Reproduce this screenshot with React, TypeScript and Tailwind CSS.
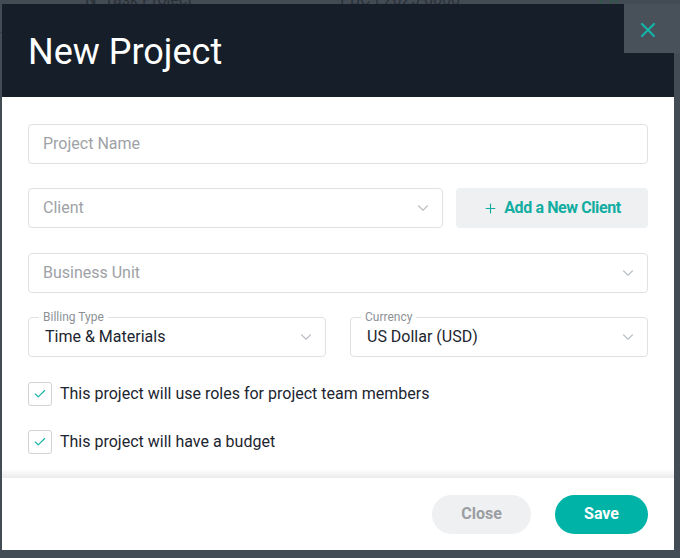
import { Check, ChevronDown, Plus, X } from "lucide-react";

const Chevron = () => (
  <ChevronDown className="w-[18px] h-[18px] text-[#bcc0c4]" strokeWidth={1.5} />
);

const SelectBox = ({ label, value, placeholder }: { label?: string; value?: string; placeholder?: string }) => (
  <div className="relative flex-1 h-[40px] rounded-[4px] border border-[#dfe1e3] flex items-center justify-between pl-[16px] pr-[10px]">
    {label && (
      <span className="absolute -top-[8px] left-[10px] px-[4px] bg-white text-[12px] leading-[14px] text-[#8c9196]">
        {label}
      </span>
    )}
    {value ? (
      <span className="text-[16px] text-[#1c2530]">{value}</span>
    ) : (
      <span className="text-[16px] text-[#9ea2a6] -ml-[2px]">{placeholder}</span>
    )}
    <Chevron />
  </div>
);

const CheckRow = ({ text }: { text: string }) => (
  <label className="flex items-center gap-[8px]">
    <span className="w-[24px] h-[24px] rounded-[3px] border border-[#cfd3d6] flex items-center justify-center">
      <Check className="w-[14px] h-[14px] text-[#16b3a7]" strokeWidth={2} />
    </span>
    <span className="text-[16px] text-[#1c2530]">{text}</span>
  </label>
);

const App = () => {
  return (
    <div
      className="relative w-[680px] h-[558px] overflow-hidden bg-[#434b54]"
      style={{ fontFamily: "Roboto, 'Liberation Sans', sans-serif" }}
    >
      {/* page behind the overlay */}
      <div className="absolute top-[-9px] left-0 w-full h-[42px] border-b border-[#3a4149] text-[16px] leading-[18px] text-[#2a3139]">
        <span className="absolute left-[85px] top-0">N&nbsp;&nbsp;Task Project</span>
        <span className="absolute left-[340px] top-0">PBC-L2025-0000</span>
        <span className="absolute left-[596px] top-0 text-[#2d5a46]">+ R</span>
      </div>

      {/* modal */}
      <div className="absolute left-[2px] top-[4px] w-[672px] h-[546px] bg-white flex flex-col">
        <header className="h-[93px] bg-[#161f29] flex items-center px-[26px] pt-[2px]">
          <h1 className="text-[36px] leading-none text-white">New Project</h1>
        </header>

        <div className="flex-1 flex flex-col px-[26px] pt-[27px]">
          <div className="h-[40px] rounded-[4px] border border-[#dfe1e3] flex items-center px-[14px]">
            <span className="text-[16px] text-[#9ea2a6]">Project Name</span>
          </div>

          <div className="flex gap-[13px] mt-[24px]">
            <SelectBox placeholder="Client" />
            <button className="w-[192px] h-[40px] rounded-[4px] bg-[#eff0f1] flex items-center justify-center gap-[6px]">
              <Plus className="w-[15px] h-[15px] text-[#12ada1]" strokeWidth={1.8} />
              <span className="text-[16px] font-bold tracking-[-0.4px] text-[#12ada1]">Add a New Client</span>
            </button>
          </div>

          <div className="flex mt-[25px]">
            <SelectBox placeholder="Business Unit" />
          </div>

          <div className="flex gap-[24px] mt-[24px]">
            <SelectBox label="Billing Type" value="Time & Materials" />
            <SelectBox label="Currency" value="US Dollar (USD)" />
          </div>

          <div className="flex flex-col gap-[24px] mt-[25px]">
            <CheckRow text="This project will use roles for project team members" />
            <CheckRow text="This project will have a budget" />
          </div>
        </div>

        <footer className="relative h-[72px] flex items-center justify-end gap-[24px] px-[26px]">
          <div className="absolute -top-[9px] left-0 w-full h-[9px] bg-gradient-to-b from-white to-[#ebebeb]" />
          <button className="w-[99px] h-[39px] rounded-full bg-[#eff0f1] text-[16px] font-bold text-[#9a9ea3]">
            Close
          </button>
          <button className="w-[93px] h-[39px] rounded-full bg-[#00b3a7] text-[16px] font-bold text-white">
            Save
          </button>
        </footer>
      </div>

      {/* close overlay button */}
      <button className="absolute right-0 top-[4px] w-[56px] h-[49px] bg-[#48505a] flex items-center justify-center pr-[8px] pt-[2px]">
        <X className="w-[24px] h-[24px] text-[#14b3a7]" strokeWidth={2.2} />
      </button>
    </div>
  );
};

export default App;
